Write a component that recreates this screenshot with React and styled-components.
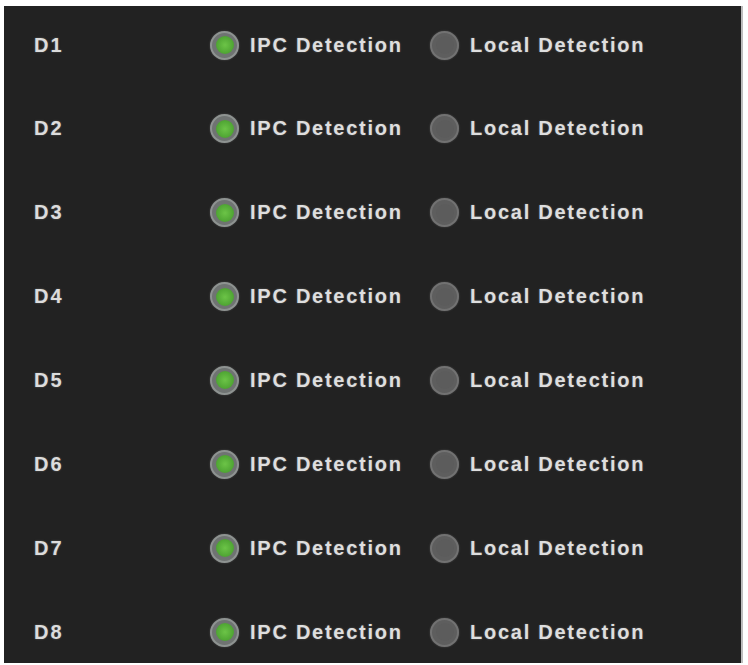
import React from "react";
import styled, { createGlobalStyle } from "styled-components";

const Global = createGlobalStyle`
  html, body { margin: 0; padding: 0; background: #ffffff; }
  body { font-family: "Liberation Sans", Arial, sans-serif; }
`;

const Panel = styled.div`
  margin: 6px 0 0 4px;
  width: 739px;
  height: 657px;
  box-sizing: border-box;
  background: #222222;
  border-right: 2px solid #bdbdbd;
  padding: 19px 0 0 30px;
  display: flex;
  flex-direction: column;
  gap: 43.86px;
`;

const Row = styled.div`
  height: 40px;
  display: flex;
  align-items: center;
`;

const Label = styled.div`
  width: 176px;
  color: #dcdcdc;
  font-size: 20px;
  font-weight: bold;
  letter-spacing: 2px;
  text-shadow: 0 0 2px rgba(220, 220, 220, 0.35);
`;

const Option = styled.div`
  width: ${(p) => p.$width}px;
  display: flex;
  align-items: center;
  gap: 11px;
`;

const Radio = styled.span`
  width: 29px;
  height: 29px;
  border-radius: 50%;
  box-sizing: border-box;
  flex: none;
  display: flex;
  align-items: center;
  justify-content: center;
  background: ${(p) => (p.$on ? "#6f7372" : "#5e5e5e")};
  border: 2px solid ${(p) => (p.$on ? "#8e9391" : "#727272")};
  box-shadow: 0 0 2px rgba(150, 150, 150, 0.4);
  &::after {
    content: "";
    width: 18px;
    height: 18px;
    border-radius: 50%;
    background: ${(p) =>
      p.$on
        ? "radial-gradient(circle at 50% 50%, #6cc447 0%, #50a634 65%, #40802f 100%)"
        : "#5c5c5c"};
  }
`;

const Text = styled.span`
  color: #dedede;
  font-size: 20px;
  font-weight: bold;
  letter-spacing: 1.75px;
  white-space: nowrap;
  text-shadow: 0 0 2px rgba(220, 220, 220, 0.35);
`;

const rows = ["D1", "D2", "D3", "D4", "D5", "D6", "D7", "D8"];

export default function App() {
  return (
    <>
      <Global />
      <Panel>
        {rows.map((r) => (
          <Row key={r}>
            <Label>{r}</Label>
            <Option $width={220}>
              <Radio $on />
              <Text>IPC Detection</Text>
            </Option>
            <Option $width={240}>
              <Radio />
              <Text>Local Detection</Text>
            </Option>
          </Row>
        ))}
      </Panel>
    </>
  );
}
